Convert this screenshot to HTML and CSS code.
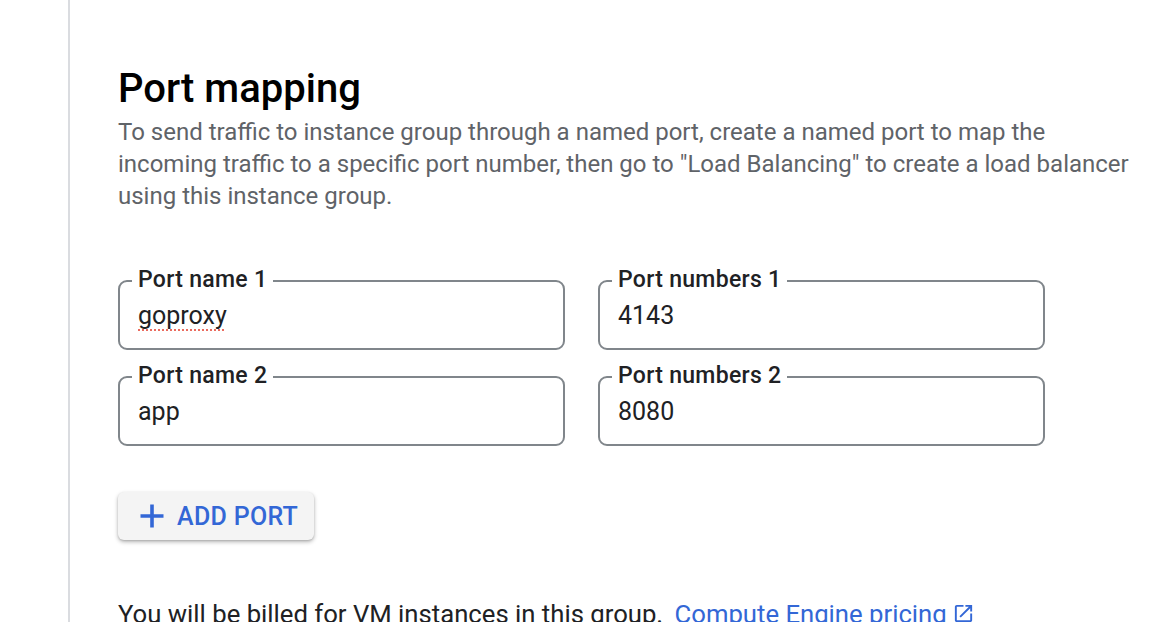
FILE: index.html
```html
<!DOCTYPE html>
<html lang="en">
<head>
    <meta charset="UTF-8" />
    <meta name="viewport" content="width=device-width, initial-scale=1.0" />
    <title>Port mapping</title>
    <link rel="stylesheet" href="styles.css">
</head>
<body>
<div class="page">
    <div class="rail"></div>

    <div class="content">
        <div class="section-title">Port mapping</div>
        <div class="section-desc">
            To send traffic to instance group through a named port, create a named port to map the<br>
            incoming traffic to a specific port number, then go to "Load Balancing" to create a load balancer<br>
            using this instance group.
        </div>

        <div class="port-grid">
            <div class="field">
                <span class="field-label">Port name 1</span>
                <div class="field-value"><span class="misspelled">goproxy</span></div>
            </div>
            <div class="field">
                <span class="field-label">Port numbers 1</span>
                <div class="field-value">4143</div>
            </div>
            <div class="field">
                <span class="field-label">Port name 2</span>
                <div class="field-value">app</div>
            </div>
            <div class="field">
                <span class="field-label">Port numbers 2</span>
                <div class="field-value">8080</div>
            </div>
        </div>

        <button class="add-port" type="button">
            <svg class="plus" width="24" height="24" viewBox="0 0 24 24">
                <path d="M12 0.5v23M0.5 12h23" stroke="currentColor" stroke-width="3.6" fill="none"/>
            </svg>
            ADD PORT
        </button>

        <div class="billing">
            You will be billed for VM instances in this group.
            <a href="#" class="ext-link">Compute Engine pricing<svg class="ext-icon" width="23" height="23" viewBox="0 0 24 24">
                    <path fill="currentColor" d="M19 19H5V5h7V3H5c-1.11 0-2 .9-2 2v14c0 1.1.89 2 2 2h14c1.1 0 2-.9 2-2v-7h-2v7zM14 3v2h3.59l-9.83 9.83 1.41 1.41L19 6.41V10h2V3h-7z"/>
                </svg></a>
        </div>
    </div>
</div>
</body>
</html>
```

FILE: styles.css
```css
html, body {
    margin: 0;
    padding: 0;
    width: 100%;
    height: 100%;
    box-sizing: border-box;
}

body {
    font-family: Roboto, "Liberation Sans", Arial, sans-serif;
    background: white;
    color: #202124;
    overflow: hidden;
}

.page {
    display: flex;
    height: 100vh;
}

.rail {
    width: 68px;
    flex-shrink: 0;
    border-right: 2px solid #dadce0;
}

.content {
    flex: 1;
    padding: 66px 0 0 48px;
}

.section-title {
    font-size: 40px;
    font-weight: 500;
    line-height: 46px;
    color: #000;
    margin-bottom: 4px;
}

.section-desc {
    font-size: 24px;
    line-height: 32px;
    color: #5f6368;
    white-space: nowrap;
}

.port-grid {
    display: grid;
    grid-template-columns: 447px 447px;
    column-gap: 33px;
    row-gap: 26px;
    margin-top: 68px;
}

.field {
    position: relative;
    height: 70px;
    box-sizing: border-box;
    border: 2px solid #80868b;
    border-radius: 9px;
    padding: 19px 18px 0;
}

.field-label {
    position: absolute;
    top: -14px;
    left: 12px;
    padding: 0 6px;
    background: white;
    font-size: 23px;
    font-weight: 500;
    line-height: 24px;
    letter-spacing: 0.3px;
    color: #202124;
}

.field-value {
    font-size: 25px;
    line-height: 30px;
    color: #202124;
}

.misspelled {
    text-decoration: underline dotted #ea6b5f;
    text-decoration-thickness: 2px;
    text-underline-offset: 5px;
}

.add-port {
    display: flex;
    align-items: center;
    gap: 13px;
    margin-top: 46px;
    height: 48px;
    width: 196px;
    padding: 0 0 0 22px;
    border: none;
    border-radius: 6px;
    background: #f4f4f4;
    box-shadow: 0 2px 4px rgba(0, 0, 0, 0.28), 0 1px 2px rgba(0, 0, 0, 0.12);
    color: #3367d6;
    font-family: Roboto, "Liberation Sans", Arial, sans-serif;
    font-size: 25px;
    font-weight: 500;
    letter-spacing: 0.3px;
    cursor: pointer;
}

.plus {
    flex-shrink: 0;
}

.billing {
    margin-top: 58px;
    font-size: 25.7px;
    line-height: 32px;
    color: #202124;
    white-space: nowrap;
}

.ext-link {
    color: #3367d6;
    text-decoration: none;
    margin-left: 5px;
}

.ext-icon {
    vertical-align: -2px;
    margin-left: 5px;
}
```
